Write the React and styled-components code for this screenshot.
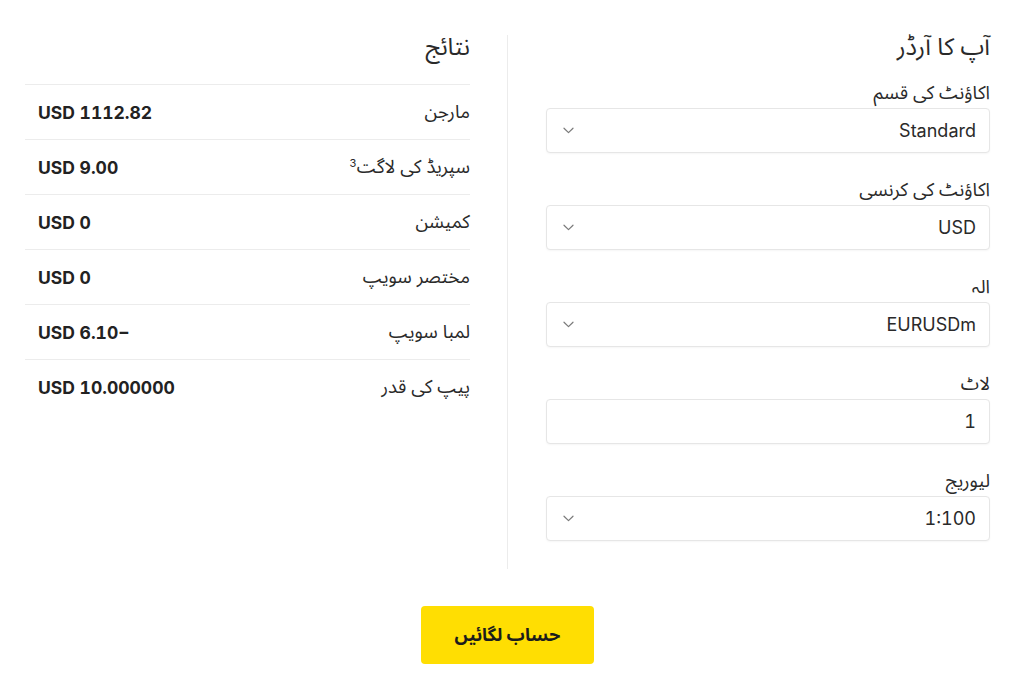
import React from "react";
import styled, { createGlobalStyle } from "styled-components";

const FONT = `Inter, "Noto Sans Arabic", "DejaVu Sans", sans-serif`;

const Global = createGlobalStyle`
  html, body { margin: 0; padding: 0; background: #ffffff; }
  body {
    font-family: ${FONT};
    font-variant-numeric: tabular-nums;
    color: #222;
  }
  * { box-sizing: border-box; }
`;

const Page = styled.div`
  width: 1024px;
  height: 690px;
  padding: 35px 34px 0 25px;
  direction: rtl;
`;

const Columns = styled.div`
  display: grid;
  grid-template-columns: 483px 445px;
  column-gap: 37px;
  align-items: stretch;
`;

const OrderColumn = styled.section`
  border-left: 1px solid #ececec;
  padding-left: 38px;
  padding-bottom: 28px;
  display: flex;
  flex-direction: column;
`;

const ResultsColumn = styled.section`
  display: flex;
  flex-direction: column;
`;

const Heading = styled.h2`
  margin: 0;
  font-size: 24px;
  line-height: 24px;
  font-weight: 400;
  color: #2a2a2a;
`;

const Form = styled.div`
  margin-top: 21px;
  display: flex;
  flex-direction: column;
  gap: 24px;
`;

const Field = styled.label`
  display: flex;
  flex-direction: column;
  gap: 4px;
`;

const LabelText = styled.span`
  font-size: 18.5px;
  line-height: 24px;
  color: #2a2a2a;
`;

const Control = styled.div`
  position: relative;
  height: 45px;
  border: 1px solid #e6e6e6;
  border-radius: 4px;
  box-shadow: 0 1px 2px rgba(0, 0, 0, 0.04);
  background: #fff;
`;

const Select = styled.select`
  appearance: none;
  width: 100%;
  height: 100%;
  border: none;
  background: transparent;
  direction: rtl;
  padding: 0 13px 0 40px;
  font-family: ${FONT};
  font-variant-numeric: tabular-nums;
  font-size: 18px;
  color: #2a2a2a;
  outline: none;
`;

const TextInput = styled.input`
  width: 100%;
  height: 100%;
  border: none;
  background: transparent;
  direction: rtl;
  padding: 0 13px;
  font-family: ${FONT};
  font-variant-numeric: tabular-nums;
  font-size: 18px;
  color: #2a2a2a;
  outline: none;
`;

const Chevron = styled.svg`
  position: absolute;
  left: 16px;
  top: 50%;
  width: 11px;
  height: 7px;
  margin-top: -4px;
  pointer-events: none;
`;

const Table = styled.div`
  margin-top: 25px;
  border-top: 1px solid #ececec;
`;

const Row = styled.div`
  display: flex;
  justify-content: space-between;
  align-items: center;
  height: 54px;
  padding-left: 13px;
  border-bottom: ${(p) => (p.$last ? "none" : "1px solid #ececec")};
  box-sizing: content-box;
`;

const RowLabel = styled.span`
  font-size: 18.5px;
  color: #2a2a2a;
  sup {
    font-size: 11px;
    vertical-align: 6px;
  }
`;

const RowValue = styled.span`
  direction: ltr;
  font-size: 17.5px;
  font-weight: 700;
  color: #222;
`;

const ButtonBar = styled.div`
  display: flex;
  justify-content: center;
  width: 965px;
  margin-top: 37px;
`;

const CalcButton = styled.button`
  width: 173px;
  height: 58px;
  border: none;
  border-radius: 4px;
  background: #ffde02;
  font-family: ${FONT};
  font-size: 18px;
  font-weight: 700;
  color: #1c1c1c;
  cursor: pointer;
`;

const ChevronIcon = () => (
  <Chevron viewBox="0 0 11 7" fill="none">
    <path d="M1 1.2 L5.5 5.6 L10 1.2" stroke="#7a7a7a" strokeWidth="1.2" strokeLinecap="round" strokeLinejoin="round" />
  </Chevron>
);

const SelectField = ({ label, value }) => (
  <Field>
    <LabelText>{label}</LabelText>
    <Control>
      <Select defaultValue={value}>
        <option value={value}>{value}</option>
      </Select>
      <ChevronIcon />
    </Control>
  </Field>
);

const results = [
  { label: "مارجن", value: "USD 1112.82" },
  { label: "سپریڈ کی لاگت", sup: "3", value: "USD 9.00" },
  { label: "کمیشن", value: "USD 0" },
  { label: "مختصر سویپ", value: "USD 0" },
  { label: "لمبا سویپ", value: "USD 6.10−" },
  { label: "پیپ کی قدر", value: "USD 10.000000" },
];

export default function App() {
  return (
    <>
      <Global />
      <Page>
        <Columns>
          <OrderColumn>
            <Heading>آپ کا آرڈر</Heading>
            <Form>
              <SelectField label="اکاؤنٹ کی قسم" value="Standard" />
              <SelectField label="اکاؤنٹ کی کرنسی" value="USD" />
              <SelectField label="الہ" value="EURUSDm" />
              <Field>
                <LabelText>لاٹ</LabelText>
                <Control>
                  <TextInput defaultValue="1" />
                </Control>
              </Field>
              <SelectField label="لیوریج" value="1:100" />
            </Form>
          </OrderColumn>
          <ResultsColumn>
            <Heading>نتائج</Heading>
            <Table>
              {results.map((r, i) => (
                <Row key={r.label} $last={i === results.length - 1}>
                  <RowLabel>
                    {r.label}
                    {r.sup && <sup>{r.sup}</sup>}
                  </RowLabel>
                  <RowValue>{r.value}</RowValue>
                </Row>
              ))}
            </Table>
          </ResultsColumn>
        </Columns>
        <ButtonBar>
          <CalcButton>حساب لگائیں</CalcButton>
        </ButtonBar>
      </Page>
    </>
  );
}
